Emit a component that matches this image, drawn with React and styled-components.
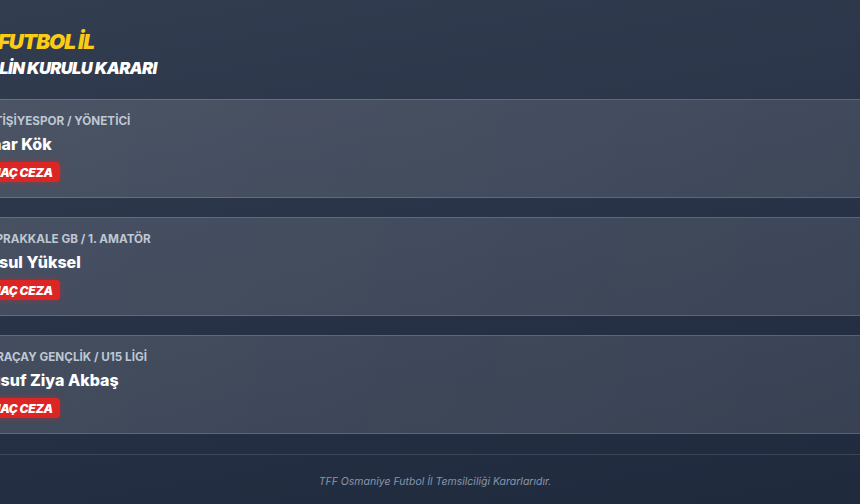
import React from "react";
import styled, { createGlobalStyle } from "styled-components";

const Global = createGlobalStyle`
  html, body { margin: 0; padding: 0; height: 100%; overflow: hidden; }
  body {
    background: linear-gradient(170deg, #333d50 0%, #2a3549 40%, #232e42 75%, #202a3d 100%);
    font-family: Inter, "Noto Sans", sans-serif;
    color: #fff;
  }
  #root { min-height: 100%; }
`;

const Page = styled.div`
  width: 952px;
  margin-left: -41px;
  display: flex;
  flex-direction: column;
`;

const Header = styled.header`
  padding: 30px 0 21px;
  display: flex;
  flex-direction: column;
`;

const TitleTop = styled.div`
  font-size: 20.8px;
  line-height: 24px;
  font-weight: 900;
  font-style: italic;
  letter-spacing: -1px;
  color: #facc15;
  white-space: nowrap;
`;

const TitleSub = styled.div`
  margin-top: 5px;
  font-size: 16.5px;
  line-height: 19px;
  font-weight: 900;
  font-style: italic;
  letter-spacing: -0.6px;
  color: #ffffff;
  white-space: nowrap;
`;

const List = styled.div`
  display: flex;
  flex-direction: column;
  gap: 19px;
`;

const Card = styled.article`
  border: 1px solid rgba(255, 255, 255, 0.17);
  background: linear-gradient(100deg, rgba(255, 255, 255, 0.135) 0%, rgba(255, 255, 255, 0.1) 100%);
  padding: 14px 19px 15px;
  display: flex;
  flex-direction: column;
  align-items: flex-start;
`;

const Meta = styled.div`
  font-size: 11.7px;
  line-height: 14px;
  font-weight: 700;
  color: #bfc7d3;
  text-transform: uppercase;
  white-space: nowrap;
`;

const Name = styled.div`
  margin-top: 6px;
  font-size: 16px;
  line-height: 20px;
  font-weight: 800;
  color: #ffffff;
  white-space: nowrap;
`;

const Badge = styled.span`
  margin-top: 8px;
  height: 20px;
  display: inline-flex;
  align-items: center;
  padding: 0 7px 0 10px;
  border-radius: 4px;
  background: #dc2626;
  box-shadow: 0 0 6px rgba(220, 38, 38, 0.45);
  font-size: 12px;
  font-weight: 900;
  font-style: italic;
  letter-spacing: -0.3px;
  color: #ffffff;
  white-space: nowrap;
`;

const Footer = styled.footer`
  margin-top: 20px;
  border-top: 1px solid rgba(255, 255, 255, 0.12);
  padding-top: 20px;
  text-align: center;
  font-size: 10.5px;
  line-height: 14px;
  font-style: italic;
  color: #8896ab;
`;

const decisions = [
  { meta: "YETİŞİYESPOR / YÖNETİCİ", name: "Onar Kök", penalty: "MAÇ CEZA" },
  { meta: "TOPRAKKALE GB / 1. AMATÖR", name: "Resul Yüksel", penalty: "MAÇ CEZA" },
  { meta: "KARAÇAY GENÇLİK / U15 LİGİ", name: "Yusuf Ziya Akbaş", penalty: "MAÇ CEZA" },
];

export default function App() {
  return (
    <>
      <Global />
      <Page>
        <Header>
          <TitleTop>TFF FUTBOL İL</TitleTop>
          <TitleSub>DİSİPLİN KURULU KARARI</TitleSub>
        </Header>
        <List>
          {decisions.map((d) => (
            <Card key={d.name}>
              <Meta>{d.meta}</Meta>
              <Name>{d.name}</Name>
              <Badge>{d.penalty}</Badge>
            </Card>
          ))}
        </List>
        <Footer>TFF Osmaniye Futbol İl Temsilciliği Kararlarıdır.</Footer>
      </Page>
    </>
  );
}
